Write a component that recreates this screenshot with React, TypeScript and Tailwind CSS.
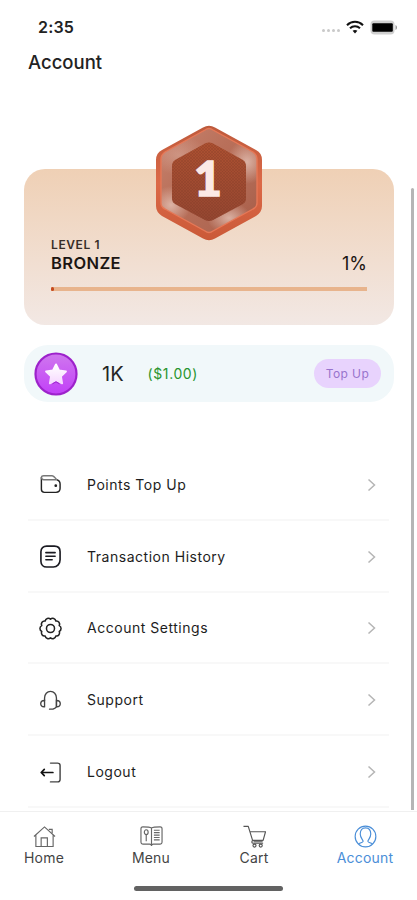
import React from 'react'

interface IconProps {
    className?: string
}

const WifiIcon = ({ className }: IconProps) => (
    <svg className={className} viewBox="0 0 18 14" fill="none" stroke="#111" strokeWidth="2">
        <path d="M1 5.2C5.4 .7 12.6 .7 17 5.2" />
        <path d="M4 8.2c2.8-2.7 7.2-2.7 10 0" />
        <path d="M6.6 10.8c1.4-1.2 3.4-1.2 4.8 0L9 13.500z" fill="#111" stroke="none" />
    </svg>
)

const BatteryIcon = ({ className }: IconProps) => (
    <svg className={className} viewBox="0 0 28 15">
        <rect x=".5" y=".5" width="24" height="14" rx="4" fill="#cfcfcf" />
        <path d="M25.5 5c2 .8 2 4.200 0 5z" fill="#9a9a9a" />
        <rect x="2.300" y="3.200" width="20.500" height="8.600" rx="1" fill="#000" />
    </svg>
)

const LevelBadge = ({ className }: IconProps) => (
    <svg className={className} viewBox="0 0 108 116">
        <defs>
            <linearGradient id="rim" x1="0" y1="0" x2="0" y2="1">
                <stop offset="0" stopColor="#bd5a3c" />
                <stop offset=".5" stopColor="#dc6947" />
                <stop offset="1" stopColor="#ca5938" />
            </linearGradient>
            <linearGradient id="bevel" x1="0" y1="0" x2="1" y2="1">
                <stop offset="0" stopColor="#c98672" />
                <stop offset=".4" stopColor="#b9705a" />
                <stop offset=".7" stopColor="#b06853" />
                <stop offset="1" stopColor="#a45843" />
            </linearGradient>
            <linearGradient id="core" x1="0" y1="0" x2="0" y2="1">
                <stop offset="0" stopColor="#ad5131" />
                <stop offset="1" stopColor="#944631" />
            </linearGradient>
            <radialGradient id="glint">
                <stop offset="0" stopColor="#ecd0c5" stopOpacity=".7" />
                <stop offset="1" stopColor="#ecd0c5" stopOpacity="0" />
            </radialGradient>
            <pattern id="mesh" width="3" height="3" patternUnits="userSpaceOnUse">
                <path d="M0 0l3 3M3 0L0 3" stroke="#813823" strokeWidth=".5" opacity=".55" />
            </pattern>
            <clipPath id="bevelClip">
                <path d="M50 5Q54 2 58 5L98 27Q102 30 102 34V78Q102 82 98 84L58 106Q54 109 50 106L10 84Q6 82 6 78V34Q6 30 10 27Z" />
            </clipPath>
        </defs>
        <path d="M48 2.500Q54-1 60 2.500L101 25Q107 28 107 35V81Q107 87 101 91L60 113.500Q54 117 48 113.500L7 91Q1 87 1 81V35Q1 28 7 25Z" fill="url(#rim)" />
        <g clipPath="url(#bevelClip)">
            <rect width="108" height="116" fill="url(#bevel)" />
            <ellipse cx="92" cy="37" rx="20" ry="22" fill="url(#glint)" />
            <ellipse cx="16" cy="80" rx="20" ry="19" fill="url(#glint)" />
            <ellipse cx="74" cy="93" rx="22" ry="16" fill="url(#glint)" />
            <ellipse cx="24" cy="30" rx="28" ry="20" fill="url(#glint)" opacity=".45" />
        </g>
        <path d="M50 5Q54 2 58 5L98 27Q102 30 102 34V78Q102 82 98 84L58 106Q54 109 50 106L10 84Q6 82 6 78V34Q6 30 10 27Z" fill="none" stroke="#e67857" strokeWidth="1.400" />
        <path d="M50 18.500Q54 16.500 58 18.500L88 35Q91 37 91 40V74Q91 77 88 79L58 95Q54 97 50 95L20 79Q17 77 17 74V40Q17 37 20 35Z" fill="url(#core)" />
        <path d="M50 18.500Q54 16.500 58 18.500L88 35Q91 37 91 40V74Q91 77 88 79L58 95Q54 97 50 95L20 79Q17 77 17 74V40Q17 37 20 35Z" fill="url(#mesh)" />
    </svg>
)

const CoinIcon = ({ className }: IconProps) => (
    <svg className={className} viewBox="0 0 44 44">
        <defs>
            <linearGradient id="coin" x1="0" y1="0" x2="0" y2="1">
                <stop offset="0" stopColor="#cf78ee" />
                <stop offset="1" stopColor="#c23ff8" />
            </linearGradient>
            <linearGradient id="star" x1="0" y1="0" x2="0" y2="1">
                <stop offset="0" stopColor="#fff" />
                <stop offset="1" stopColor="#f6d9ff" />
            </linearGradient>
        </defs>
        <circle cx="22" cy="22" r="20.500" fill="url(#coin)" stroke="#9d22cb" strokeWidth="2.200" />
        <path d="M22 12.500l3 6 6.900 1-5 4.900 1.200 6.900L22 28l-6.100 3.300 1.200-6.900-5-4.900 6.900-1z" fill="url(#star)" stroke="url(#star)" strokeWidth="2" strokeLinejoin="round" />
        <path d="M18.500 31.800L22 29.800l3.500 2" fill="none" stroke="#9d22cb" strokeWidth="1" />
    </svg>
)

const WalletIcon = ({ className }: IconProps) => (
    <svg className={className} viewBox="0 0 24 24" fill="none" stroke="#222" strokeWidth="1.500" strokeLinejoin="round">
        <path d="M18.500 7c2.300.5 3.500 2 3.500 4.500V16c0 2.700-1.500 4.200-4.300 4.200h-12c-2.200 0-3.200-1-3.200-3.200V4.500" />
        <path d="M2.500 5C2.500 3.300 3.500 2.800 5 2.800h8.500c1.500 0 3.500 2.200 5 4.200M18.500 7H5C3.300 7 2.500 6.200 2.500 4.800" stroke="#777" />
        <circle cx="17.500" cy="13.200" r=".7" fill="#222" />
    </svg>
)

const HistoryIcon = ({ className }: IconProps) => (
    <svg className={className} viewBox="0 0 24 24" fill="none" stroke="#1b1b22" strokeWidth="1.700" strokeLinecap="round" strokeLinejoin="round">
        <path d="M8 1.200h8c3.500 0 6 2 6 5.800v8.500c0 4-3 7.500-7 7.500H8c-3.500 0-6-2.500-6-6V7c0-3.800 2.500-5.800 6-5.800Z" />
        <path d="M7.200 8h9.600M7.200 11.700h9.600M7.200 15.400h6.500" />
    </svg>
)

const SettingsIcon = ({ className }: IconProps) => (
    <svg className={className} viewBox="0 0 24 24" fill="none" stroke="#222" strokeWidth="1.600" strokeLinejoin="round">
        <path d="M21.100 15A3.300 3.300 0 0 1 17.600 19.800A3.300 3.300 0 0 1 12 21.600A3.300 3.300 0 0 1 6.400 19.800A3.300 3.300 0 0 1 2.900 15A3.300 3.300 0 0 1 2.900 9A3.300 3.300 0 0 1 6.400 4.200A3.300 3.300 0 0 1 12 2.400A3.300 3.300 0 0 1 17.600 4.200A3.300 3.300 0 0 1 21.100 9A3.300 3.300 0 0 1 21.100 15Z" />
        <circle cx="12" cy="12" r="4.200" />
    </svg>
)

const SupportIcon = ({ className }: IconProps) => (
    <svg className={className} viewBox="0 0 24 24" fill="none" stroke="#444" strokeWidth="1.400" strokeLinecap="round">
        <path d="M5.800 12V9.300C5.800 5.300 8.500 2.500 12 2.500s6.200 2.800 6.200 6.800V18" />
        <path d="M5.800 12v6.500C3 18.800 1.800 17 1.800 15.300S3 12 5.800 12Z" />
        <path d="M18.200 12v6.500c2.800.3 4-1.500 4-3.200S21 12 18.200 12Z" />
        <path d="M18.200 18.500c-.8 1.300-1.800 1.800-3 2.200M11 21h3.500" />
    </svg>
)

const LogoutIcon = ({ className }: IconProps) => (
    <svg className={className} viewBox="0 0 24 24" fill="none" stroke="#444" strokeWidth="1.500" strokeLinecap="round" strokeLinejoin="round">
        <path d="M12 2.200h7.500c1.700 0 2.500.8 2.500 2.500v14.600c0 1.700-.8 2.500-2.500 2.500H12" />
        <path d="M14.500 12H2.500M5.500 8.800L2.300 12l3.200 3.200" stroke="#111" strokeWidth="1.800" />
    </svg>
)

const HomeIcon = ({ className }: IconProps) => (
    <svg className={className} viewBox="0 0 24 24" fill="none" stroke="#666" strokeWidth="1.200">
        <path d="M1 12L12 2l11 10M3 10.500v11.900h18V10.500" />
        <path d="M8.500 22v-8.500h6.500V22M16.500 4.500h3.500V8.500" />
    </svg>
)

const MenuIcon = ({ className }: IconProps) => (
    <svg className={className} viewBox="0 0 24 24" fill="none" stroke="#666" strokeWidth="1.200">
        <path d="M12 3.200C10.500 2.200 7 2 3 2 1.500 2 1 2.500 1 4v14c0 1.500.5 2 2 2h7c1 0 2 .6 2 2 0-1.400 1-2 2-2h7c1.500 0 2-.5 2-2V4c0-1.500-.5-2-2-2-4 0-7.500.2-9 1.200V22" />
        <ellipse cx="6.500" cy="7.500" rx="2" ry="2.500" />
        <path d="M6.500 10v7M14.500 5.500h6M14.500 8h6M14.500 10.500h6M14.500 13h6M14.500 15.500h6" />
    </svg>
)

const CartIcon = ({ className }: IconProps) => (
    <svg className={className} viewBox="0 0 24 24" fill="none" stroke="#555" strokeWidth="1.200" strokeLinejoin="round">
        <path d="M.5 1.500h5l4.500 14.500h11L23.500 7H7.400" />
        <path d="M10 16c-1.200 1.500-.8 3 .5 3H21M11 17.500h9.500" />
        <circle cx="12" cy="21.500" r="1.600" />
        <circle cx="18.500" cy="21.500" r="1.600" />
    </svg>
)

const AccountIcon = ({ className }: IconProps) => (
    <svg className={className} viewBox="0 0 24 24" fill="none" stroke="#4a8ed8" strokeWidth="1.200">
        <circle cx="12" cy="12" r="10.800" />
        <path d="M4.500 19.500c3-.7 5-1.200 5-2.500 0-1.500-3-3.500-3-7.500C6.500 5 8.700 3 12 3s5.500 2 5.500 6.500c0 4-3 6-3 7.500 0 1.300 2 1.800 5 2.500" />
    </svg>
)

const menuItems = [
    { label: 'Points Top Up', icon: WalletIcon },
    { label: 'Transaction History', icon: HistoryIcon },
    { label: 'Account Settings', icon: SettingsIcon },
    { label: 'Support', icon: SupportIcon },
    { label: 'Logout', icon: LogoutIcon },
]

const tabs = [
    { label: 'Home', icon: HomeIcon, spacing: 'ml-[14px] w-[60px]', color: 'text-[#444]' },
    { label: 'Menu', icon: MenuIcon, spacing: 'ml-[47px] w-[60px]', color: 'text-[#444]' },
    { label: 'Cart', icon: CartIcon, spacing: 'ml-[43px] w-[60px]', color: 'text-[#444]' },
    { label: 'Account', icon: AccountIcon, spacing: 'ml-[46px] w-[70px]', color: 'text-[#4a8ed8]' },
]

const StatusBar = () => (
    <div className="flex h-[46px] shrink-0 items-center pl-[38px] pr-[19px] pt-2">
        <span className="text-[16px] font-semibold leading-5 tracking-[0.2px] text-[#222]">2:35</span>
        <div className="ml-auto flex items-center">
            <div className="mr-[6px] mt-[7px] flex gap-[2px]">
                {[0, 1, 2, 3].map((dot) => (
                    <span key={dot} className="h-[3px] w-[3px] rounded-full bg-[#c9c9c9]" />
                ))}
            </div>
            <WifiIcon className="mr-[6px] h-[14px] w-[18px]" />
            <BatteryIcon className="h-[15px] w-[28px]" />
        </div>
    </div>
)

const LevelCard = () => (
    <section className="relative ml-6 mt-[95px] h-[156px] w-[370px] shrink-0 rounded-[21px] bg-linear-to-b from-[#efd0b5] to-[#f2e8e4] px-[27px] pt-[69px]">
        <div className="absolute left-[131px] top-[-44px] h-[116px] w-[108px]">
            <LevelBadge className="h-full w-full" />
            <span className="absolute inset-0 flex items-center justify-center pb-[10px] pr-[2px] font-['Lato'] text-[48px] font-black leading-none text-[#fbe9e5] [-webkit-text-stroke:1.500px_#fbe9e5]">1</span>
        </div>
        <p className="text-[12px] font-semibold leading-[13px] tracking-[0.6px] text-[#382d27]">LEVEL 1</p>
        <div className="flex items-center justify-between text-[#1b1512]">
            <span className="text-[16.500px] font-semibold leading-[22px] tracking-[0.400px]">BRONZE</span>
            <span className="pt-[2px] text-[18px] leading-[22px]">1%</span>
        </div>
        <div className="mt-[12px] h-[4px] w-[316px] bg-[#e8b48d]">
            <div className="h-full w-[3px] rounded-full bg-[#c4481d]" />
        </div>
    </section>
)

const PointsBar = () => (
    <section className="ml-6 mt-5 flex h-[57px] w-[370px] shrink-0 items-center rounded-[24px] bg-[#f1f8fa] pl-[10px] pr-[13px]">
        <CoinIcon className="h-[44px] w-[44px]" />
        <span className="ml-[24px] text-[20px] leading-6 text-[#252525]">1K</span>
        <span className="ml-[24px] text-[14px] leading-5 tracking-[0.6px] text-[#29942e]">($1.00)</span>
        <button className="ml-auto h-[29px] w-[67px] rounded-full bg-[#e8d3fd] pt-px text-[12px] tracking-[0.4px] text-[#9873cd]">Top Up</button>
    </section>
)

const MenuList = () => (
    <ul className="ml-[28px] mt-[47px] w-[361px] shrink-0">
        {menuItems.map(({ label, icon: Icon }) => (
            <li key={label} className="flex h-[71.800px] items-center border-b-2 border-[#f8f8f8] pl-[11px] pr-[9px] pt-[2px]">
                <Icon className="h-[23px] w-[23px]" />
                <span className="ml-[25px] whitespace-nowrap text-[14px] leading-5 tracking-[0.520px] text-[#1d1d1d]">{label}</span>
                <svg className="ml-auto h-[14px] w-[16px]" viewBox="0 0 16 14" fill="none" stroke="#b5b5b5" strokeWidth="1.500">
                    <path d="M4.500 1.500l6 5.500-6 5.500" />
                </svg>
            </li>
        ))}
    </ul>
)

const TabBar = () => (
    <nav className="mt-auto flex h-[89px] shrink-0 flex-col border-t border-[#f0f0f0] bg-white">
        <div className="flex pt-[13px]">
            {tabs.map(({ label, icon: Icon, spacing, color }) => (
                <div key={label} className={`flex flex-col items-center ${spacing} ${color}`}>
                    <Icon className="h-[23px] w-[23px]" />
                    <span className="text-[14px] leading-[20px] tracking-[0.200px]">{label}</span>
                </div>
            ))}
        </div>
        <div className="ml-[134px] mt-[18px] h-[5px] w-[149px] rounded-full bg-[#626262]" />
    </nav>
)

const App = () => {
    return (
        <main className="relative flex h-[900px] w-[417px] flex-col overflow-hidden bg-white font-['Inter',sans-serif]">
            <StatusBar />
            <h1 className="ml-[28px] mt-[4px] h-[24px] shrink-0 text-[18.500px] font-medium leading-[24px] text-[#222]">Account</h1>
            <LevelCard />
            <PointsBar />
            <MenuList />
            <TabBar />
            <div className="absolute left-[410.500px] top-[188px] h-[622px] w-[3px] rounded-t-full bg-[#b5b5b5]" />
        </main>
    )
}

export default App
